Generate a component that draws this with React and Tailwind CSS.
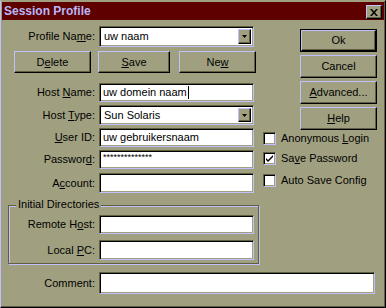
import React from 'react';

const raised = "border border-t-[#c0c0ff] border-l-[#c0c0ff] border-r-black border-b-black shadow-[inset_-1px_-1px_0_#606040]";
const sunken = "border border-t-[#606040] border-l-[#606040] border-r-[#c0c0ff] border-b-[#c0c0ff] shadow-[inset_1px_1px_0_#000,inset_-1px_-1px_0_#a0a080]";

function Btn({ children, w = 'w-[77px]', h = 'h-[23px]' }) {
  return (
    <div className={`${raised} ${w} ${h} flex items-center justify-center bg-[#a0a080]`}>
      {children}
    </div>
  );
}

function Field({ h, w = 'w-[155px]', children }) {
  return (
    <div className={`${sunken} ${w} ${h} bg-white flex items-center pl-[3px] overflow-hidden`}>
      {children}
    </div>
  );
}

function Combo({ h, value }) {
  return (
    <div className={`${sunken} w-[155px] ${h} bg-white flex items-stretch p-[2px]`}>
      <div className="flex-1 flex items-center pl-[2px]">{value}</div>
      <div className={`${raised} w-[13px] flex items-center justify-center bg-[#a0a080]`}>
        <svg width="5" height="3" viewBox="0 0 5 3">
          <path d="M0 0h5L2.5 3z" fill="#000" />
        </svg>
      </div>
    </div>
  );
}

function Row({ label, lw = 'w-[94px]', mt, children }) {
  return (
    <div className={`flex items-center ${mt}`}>
      <div className={`${lw} text-right pr-[1px]`}>{label}</div>
      <div className="ml-[3px]">{children}</div>
    </div>
  );
}

function Check({ checked, mt, children }) {
  return (
    <div className={`flex items-center ${mt}`}>
      <div className={`${sunken} w-[13px] h-[13px] bg-white flex items-center justify-center`}>
        {checked && (
          <svg width="7" height="7" viewBox="0 0 7 7">
            <path d="M0 3l2 2 5-5v2L2 7 0 5z" fill="#000" />
          </svg>
        )}
      </div>
      <div className="ml-[5px]">{children}</div>
    </div>
  );
}

export default function App() {
  return (
    <div className="w-[386px] h-[308px] bg-[#a0a080] border border-t-[#a0a080] border-l-[#c0c0ff] border-r-black border-b-black shadow-[inset_-1px_-1px_0_#606040] p-px text-[11px] leading-none text-black font-['Liberation_Sans',Arial,sans-serif] flex flex-col">
      {/* Title bar */}
      <div className="h-[18px] bg-[#5e0000] flex items-center pl-[2px] pr-[2px]">
        <span className="text-[12px] font-bold text-[#b8b8f8]">Session Profile</span>
        <div className={`${raised} ml-auto w-[16px] h-[14px] mt-[2px] flex items-center justify-center bg-[#a0a080]`}>
          <svg width="8" height="7" viewBox="0 0 8 7">
            <path d="M0 0h2l2 2.5L6 0h2L5 3.5 8 7H6L4 4.5 2 7H0l3-3.5z" fill="#000" />
          </svg>
        </div>
      </div>

      <div className="flex">
        {/* Left column */}
        <div className="w-[258px] flex flex-col">
          <Row mt="mt-[6px]" label={<>Profile Na<u>m</u>e:</>}>
            <Combo h="h-[21px]" value="uw naam" />
          </Row>

          <div className="flex mt-[4px] ml-[12px]">
            <Btn h="h-[22px]">D<u>e</u>lete</Btn>
            <div className="ml-[7px]"><Btn w="w-[72px]" h="h-[22px]"><u>S</u>ave</Btn></div>
            <div className="ml-[9px]"><Btn h="h-[22px]">Ne<u>w</u></Btn></div>
          </div>

          <Row mt="mt-[10px]" label={<>Host <u>N</u>ame:</>}>
            <Field h="h-[19px]">
              <span>uw domein naam</span>
              <span className="w-px h-[13px] bg-black ml-px" />
            </Field>
          </Row>
          <Row mt="mt-[3px]" label={<>Host <u>T</u>ype:</>}>
            <Combo h="h-[20px]" value="Sun Solaris" />
          </Row>
          <Row mt="mt-[3px]" label={<><u>U</u>ser ID:</>}>
            <Field h="h-[19px]">uw gebruikersnaam</Field>
          </Row>
          <Row mt="mt-[3px]" label={<>Passwor<u>d</u>:</>}>
            <Field h="h-[19px]">
              <span className="text-[9px] -mt-[4px]">**************</span>
            </Field>
          </Row>
          <Row mt="mt-[4px]" label={<>A<u>c</u>count:</>}>
            <Field h="h-[20px]" />
          </Row>

          {/* Initial Directories group */}
          <div className="relative mt-[12px] ml-[6px] w-[251px] h-[59px] border border-[#606040] shadow-[1px_1px_0_#c0c0ff,inset_1px_1px_0_#c0c0ff] flex flex-col">
            <span className="absolute -top-[7px] left-[7px] px-[2px] bg-[#a0a080]">Initial Directories</span>
            <Row lw="w-[87px]" mt="mt-[9px]" label={<>Remote H<u>o</u>st:</>}>
              <Field h="h-[19px]" />
            </Row>
            <Row lw="w-[87px]" mt="mt-[6px]" label={<>Local <u>P</u>C:</>}>
              <Field h="h-[20px]" />
            </Row>
          </div>
        </div>

        {/* Right column */}
        <div className="flex flex-col">
          <div className="ml-[40px] mt-[9px] flex flex-col gap-[3px]">
            <div className="w-[77px] h-[23px] border border-black">
              <Btn w="w-full" h="h-full">Ok</Btn>
            </div>
            <Btn>Cancel</Btn>
            <Btn><u>A</u>dvanced...</Btn>
            <Btn><u>H</u>elp</Btn>
          </div>
          <div className="ml-[3px] flex flex-col">
            <Check mt="mt-[2px]">Anonymous <u>L</u>ogin</Check>
            <Check mt="mt-[7px]" checked>Sa<u>v</u>e Password</Check>
            <Check mt="mt-[9px]">Auto Save Config</Check>
          </div>
        </div>
      </div>

      <Row mt="mt-[8px]" label="Comment:">
        <Field w="w-[276px]" h="h-[22px]" />
      </Row>
    </div>
  );
}
